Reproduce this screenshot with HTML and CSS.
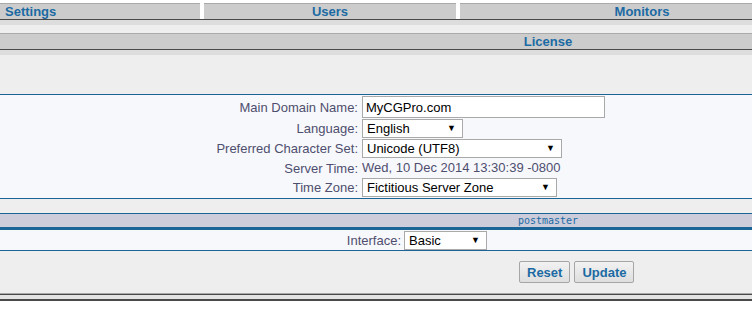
FILE: index.html
```html
<!DOCTYPE html>
<html lang="en">

<head>
    <meta charset="UTF-8">
    <title>Settings</title>
    <link rel="stylesheet" href="styles.css">
</head>

<body>
    <div class="tabs">
        <a class="tab tab-left" href="#">Settings</a>
        <a class="tab" href="#">Users</a>
        <a class="tab tab-right" href="#">Monitors</a>
    </div>
    <div class="band"></div>

    <div class="content">
        <div class="section-head">
            <span>License</span>
        </div>
        <div class="band"></div>
        <div class="spacer"></div>

        <div class="panel">
            <div class="form-grid">
                <label for="domain">Main Domain Name:</label>
                <input type="text" id="domain" class="text-input" value="MyCGPro.com">

                <label for="lang">Language:</label>
                <span class="sel sel-lang">
                    <select id="lang">
                        <option>English</option>
                    </select>
                </span>

                <label for="charset">Preferred Character Set:</label>
                <span class="sel sel-charset">
                    <select id="charset">
                        <option>Unicode (UTF8)</option>
                    </select>
                </span>

                <label>Server Time:</label>
                <span class="value">Wed, 10 Dec 2014 13:30:39 -0800</span>

                <label for="tz">Time Zone:</label>
                <span class="sel sel-tz">
                    <select id="tz">
                        <option>Fictitious Server Zone</option>
                    </select>
                </span>
            </div>
        </div>

        <div class="gap"></div>

        <div class="user-head">postmaster</div>
        <div class="panel panel-small">
            <div class="form-grid form-grid-iface">
                <label for="iface">Interface:</label>
                <span class="sel sel-iface">
                    <select id="iface">
                        <option>Basic</option>
                    </select>
                </span>
            </div>
        </div>

        <div class="actions">
            <button type="reset">Reset</button>
            <button type="submit">Update</button>
        </div>
    </div>

    <div class="footer-rule"></div>
</body>

</html>
```

FILE: styles.css
```css
* {
    box-sizing: border-box;
    margin: 0;
    padding: 0;
}

body {
    background: #ffffff;
    font-family: "Liberation Sans", Arial, sans-serif;
    font-size: 13px;
    overflow: hidden;
}

/* top navigation */
.tabs {
    display: grid;
    grid-template-columns: 200px 252px 1fr;
    column-gap: 4px;
    padding-top: 3px;
    border-bottom: 1px solid #4a4a4a;
}

.tab {
    display: block;
    height: 16px;
    line-height: 15px;
    background: #cccccc;
    border-top: 1px solid #aaaaaa;
    color: #1b6aa3;
    font-weight: bold;
    text-align: center;
    text-decoration: none;
}

.tab-left {
    text-align: left;
    padding-left: 5px;
}

.tab-right {
    padding-left: 72px;
}

.band {
    height: 5px;
    background: #dddddd;
}

.content {
    background: #eeeeee;
    padding-top: 8px;
}

.section-head {
    height: 17px;
    background: #cccccc;
    border-top: 1px solid #aaaaaa;
    border-bottom: 1px solid #4a4a4a;
    color: #1b6aa3;
    font-weight: bold;
    line-height: 15px;
    padding-left: 344px;
    text-align: center;
}

.spacer {
    height: 39px;
}

/* forms */
.panel {
    background: #f7f8fc;
    border-top: 1px solid #1a6496;
    border-bottom: 1px solid #1a6496;
    padding: 1px 0;
}

.form-grid {
    display: grid;
    grid-template-columns: 358px auto;
    column-gap: 4px;
    row-gap: 1px;
    align-items: center;
    justify-items: start;
}

.form-grid label {
    justify-self: end;
    color: #4e4e6e;
}

.form-grid-iface {
    grid-template-columns: 401px auto;
    column-gap: 3px;
}

.value {
    color: #4e4e6e;
    line-height: 18px;
}

.text-input {
    width: 243px;
    height: 22px;
    border: 1px solid #a9a9a9;
    background: #ffffff;
    padding: 0 3px;
    font: 13px "Liberation Sans", Arial, sans-serif;
    color: #000000;
}

.sel {
    position: relative;
    display: inline-block;
}

.sel select {
    appearance: none;
    -webkit-appearance: none;
    width: 100%;
    height: 19px;
    border: 1px solid #a9a9a9;
    background: #ffffff;
    padding: 0 4px;
    font: 13px "Liberation Sans", Arial, sans-serif;
    color: #000000;
}

.sel::after {
    content: "\25BC";
    position: absolute;
    right: 7px;
    top: 4px;
    font-size: 9px;
    line-height: 10px;
    color: #000000;
    pointer-events: none;
}

.sel-lang {
    width: 101px;
}

.sel-charset {
    width: 200px;
}

.sel-tz {
    width: 195px;
}

.sel-iface {
    width: 83px;
}

.gap {
    height: 14px;
}

.user-head {
    height: 16px;
    background: #ccccdb;
    border-top: 1px solid #1a6496;
    border-bottom: 2px solid #1a6496;
    color: #1b6aa3;
    font: 10px "DejaVu Sans Mono", monospace;
    line-height: 13px;
    padding-left: 344px;
    text-align: center;
}

.panel-small {
    height: 22px;
}

.actions {
    height: 42px;
    padding: 10px 0 0 519px;
    display: flex;
    gap: 4px;
    align-items: flex-start;
}

.actions button {
    height: 22px;
    padding: 0 7px;
    border: 1px solid #a6a6a6;
    border-radius: 2px;
    background: linear-gradient(#f2f2f2, #dedede);
    color: #1b6aa3;
    font: bold 13px "Liberation Sans", Arial, sans-serif;
    cursor: pointer;
}

.footer-rule {
    height: 8px;
    border-top: 1px solid #aaaaaa;
    background: #e4e4e4;
    box-shadow: inset 0 1px 0 #4a4a4a, inset 0 -2px 0 #4a4a4a;
}
```
